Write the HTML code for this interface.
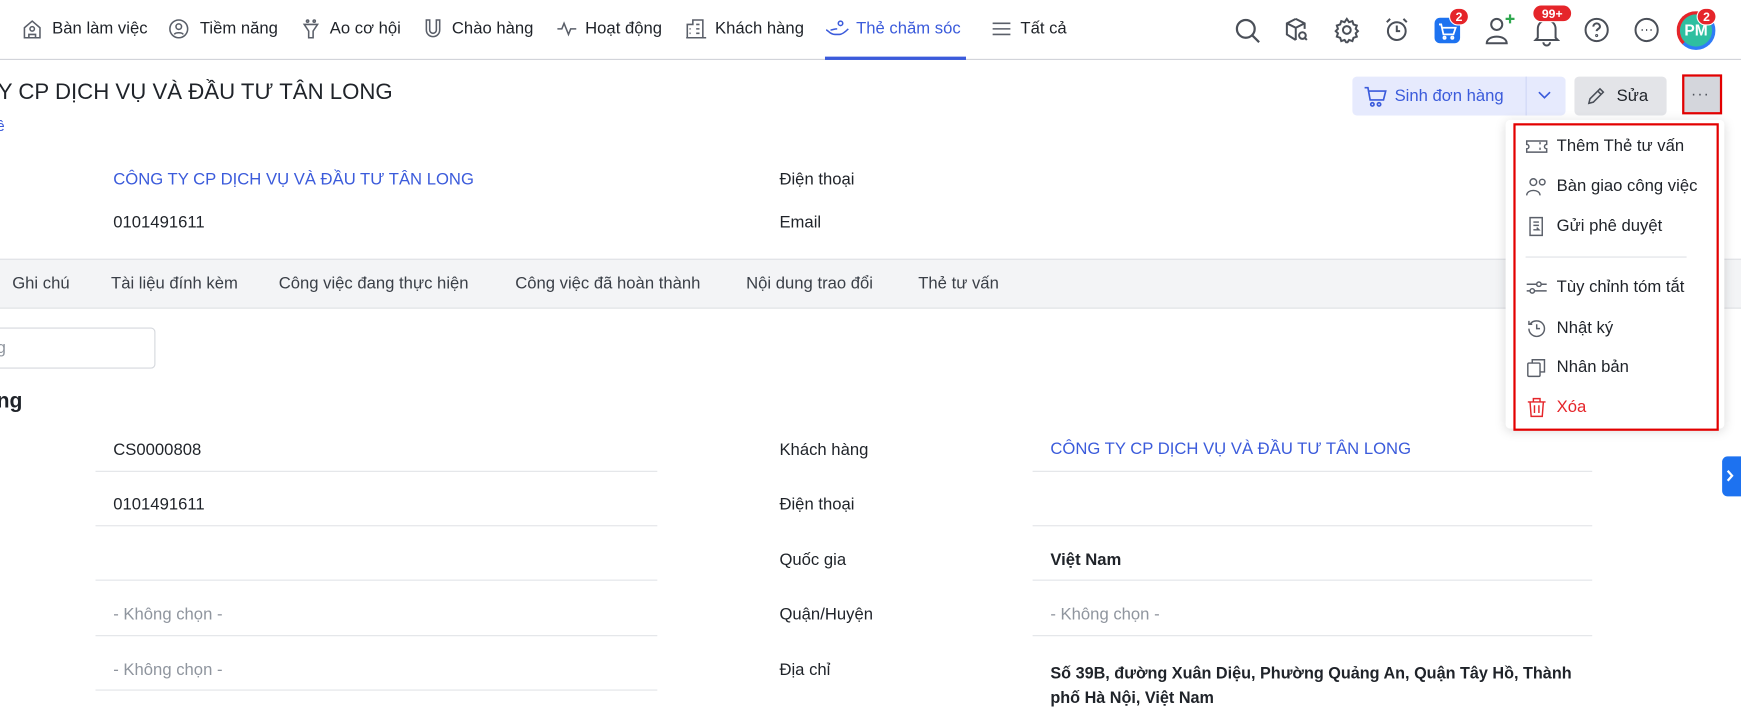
<!DOCTYPE html>
<html><head><meta charset="utf-8"><style>
*{margin:0;padding:0;box-sizing:border-box}
html,body{width:1741px;height:705px;overflow:hidden;background:#fff}
#w{position:absolute;left:0;top:0;width:1568px;height:635px;transform:scale(1.11033);transform-origin:0 0;font-family:"Liberation Sans",sans-serif;color:#1f2329;font-size:15px}
.a{position:absolute;white-space:nowrap}
.nav{position:absolute;left:0;top:0;width:1568px;height:54px;border-bottom:1px solid #d0d3d9}
.ni{position:absolute;top:17px;font-size:15px;color:#1f2329}
.ic{position:absolute}
.blue{color:#3b5bdb}
.ul{position:absolute;height:1px;background:#e2e4e8}
.grey{color:#8f959e}
.mi{position:absolute;left:1374px;font-size:15px;color:#1f2329}
.mi svg{position:absolute;left:0;top:0}
.mi span{position:absolute;left:28px;top:0;white-space:nowrap}
.badge{position:absolute;background:#e5252a;color:#fff;font-size:11px;font-weight:bold;border-radius:9px;text-align:center;line-height:16px;height:16px;border:1px solid #fff}
</style></head><body><div id="w">
<div class="nav">
<svg class="ic" style="left:19px;top:16px" width="20" height="20" viewBox="0 0 20 20" fill="none" stroke="#5a5f69" stroke-width="1.4"><path d="M3 9l7-6 7 6v9H3z"/><circle cx="10" cy="10" r="2"/><path d="M7 18v-3h6v3"/></svg>
<div class="ni" style="left:47px">Bàn làm việc</div>
<svg class="ic" style="left:151px;top:16px" width="20" height="20" viewBox="0 0 20 20" fill="none" stroke="#5a5f69" stroke-width="1.4"><circle cx="10" cy="10" r="8"/><circle cx="10" cy="8" r="2.5"/><path d="M6 15c1-2 7-2 8 0"/></svg>
<div class="ni" style="left:180px">Tiềm năng</div>
<svg class="ic" style="left:271px;top:16px" width="18" height="20" viewBox="0 0 18 20" fill="none" stroke="#5a5f69" stroke-width="1.4"><path d="M3 6h12l-4 6v6H7v-6z"/><circle cx="6" cy="3" r="1"/><circle cx="12" cy="3" r="1"/></svg>
<div class="ni" style="left:297px">Ao cơ hội</div>
<svg class="ic" style="left:381px;top:16px" width="18" height="20" viewBox="0 0 18 20" fill="none" stroke="#5a5f69" stroke-width="1.4"><path d="M3 2v9a6 6 0 0012 0V2h-3v9a3 3 0 01-6 0V2z"/></svg>
<div class="ni" style="left:407px">Chào hàng</div>
<svg class="ic" style="left:501px;top:16px" width="20" height="20" viewBox="0 0 20 20" fill="none" stroke="#5a5f69" stroke-width="1.4"><path d="M1 10h4l2-5 4 10 2-5h5"/></svg>
<div class="ni" style="left:527px">Hoạt động</div>
<svg class="ic" style="left:617px;top:16px" width="20" height="20" viewBox="0 0 20 20" fill="none" stroke="#5a5f69" stroke-width="1.4"><path d="M2 18V6h5V2h9v16zM1 18h18M10 6h3M10 10h3M10 14h3M4 10h1M4 14h1"/></svg>
<div class="ni" style="left:644px">Khách hàng</div>
<svg class="ic" style="left:743px;top:16px" width="22" height="20" viewBox="0 0 22 20" fill="none" stroke="#3b5bdb" stroke-width="1.4"><path d="M1 11c2 0 3 4 8 4h4c3 0 6-3 8-5M5 11c2 0 3-1 6-1M14 3a2 2 0 110 4 2 2 0 010-4z"/></svg>
<div class="ni blue" style="left:771px">Thẻ chăm sóc</div>
<div class="a" style="left:743px;top:51px;width:127px;height:3px;background:#3b5bdb"></div>
<svg class="ic" style="left:893px;top:17px" width="18" height="18" viewBox="0 0 18 18" stroke="#5a5f69" stroke-width="1.4"><path d="M1 4h16M1 9h16M1 14h16"/></svg>
<div class="ni" style="left:919px">Tất cả</div>

<svg class="ic" style="left:1111px;top:15px" width="26" height="26" viewBox="0 0 26 26" fill="none" stroke="#4a4f58" stroke-width="2"><circle cx="11" cy="11" r="8"/><path d="M17 17l6 6"/></svg>
<svg class="ic" style="left:1156px;top:15px" width="24" height="24" viewBox="0 0 24 24" fill="none" stroke="#4a4f58" stroke-width="1.8"><path d="M11 2l8 4v5M11 2L3 6v10l8 5M3 6l8 4 8-4M11 10v11"/><circle cx="17" cy="17" r="3"/><path d="M19 19l2 2"/></svg>
<svg class="ic" style="left:1201px;top:15px" width="24" height="24" viewBox="0 0 24 24" fill="none" stroke="#4a4f58" stroke-width="1.8"><circle cx="12" cy="12" r="3.5"/><path d="M12 2l2 3 3-1 1 3 3 1-1 3 2 2-2 2 1 3-3 1-1 3-3-1-2 3-2-3-3 1-1-3-3-1 1-3-2-2 2-2-1-3 3-1 1-3 3 1z"/></svg>
<svg class="ic" style="left:1246px;top:15px" width="24" height="24" viewBox="0 0 24 24" fill="none" stroke="#4a4f58" stroke-width="1.8"><circle cx="12" cy="13" r="8"/><path d="M12 8v5h3M3 5l3-3M21 5l-3-3"/></svg>
<div class="a" style="left:1292px;top:16px;width:23px;height:23px;border-radius:5px;background:#1d72f0"></div>
<svg class="ic" style="left:1294px;top:19px" width="19" height="18" viewBox="0 0 19 18" fill="none" stroke="#fff" stroke-width="1.6"><path d="M2 3h2l2 9h9l2-6H5"/><circle cx="7" cy="15" r="1"/><circle cx="14" cy="15" r="1"/></svg>
<div class="badge" style="left:1305px;top:7px;width:18px">2</div>
<svg class="ic" style="left:1336px;top:13px" width="28" height="28" viewBox="0 0 28 28" fill="none" stroke="#4a4f58" stroke-width="1.8"><circle cx="12" cy="9" r="5"/><path d="M3 26c0-8 18-8 18 0z"/></svg>
<svg class="ic" style="left:1355px;top:12px" width="10" height="10" viewBox="0 0 10 10" stroke="#2fa84f" stroke-width="2"><path d="M5 1v8M1 5h8"/></svg>
<svg class="ic" style="left:1381px;top:14px" width="24" height="28" viewBox="0 0 24 28" fill="none" stroke="#4a4f58" stroke-width="1.8"><path d="M4 20V12a8 8 0 0116 0v8l2 2H2zM9 24a3 3 0 006 0"/></svg>
<div class="badge" style="left:1380px;top:4px;width:36px">99+</div>
<svg class="ic" style="left:1426px;top:15px" width="24" height="24" viewBox="0 0 24 24" fill="none" stroke="#4a4f58" stroke-width="1.8"><circle cx="12" cy="12" r="10"/><path d="M9 9a3 3 0 116 0c0 2-3 2-3 4"/><circle cx="12" cy="17" r=".5"/></svg>
<svg class="ic" style="left:1471px;top:15px" width="24" height="24" viewBox="0 0 24 24" fill="none" stroke="#4a4f58" stroke-width="1.8"><circle cx="12" cy="12" r="10"/><path d="M7.5 12h1M11.5 12h1M15.5 12h1"/></svg>
<div class="a" style="left:1510px;top:10px;width:35px;height:35px;border-radius:50%;border:3px solid #e5252a;border-bottom-color:#2f7cf6;border-right-color:#2f7cf6;background:#2ebfa0;color:#fff;font-weight:bold;font-size:14px;text-align:center;line-height:29px">PM</div>
<div class="badge" style="left:1528px;top:7px;width:18px">2</div>
</div>

<div class="a" style="left:-2px;top:72px;font-size:20px;color:#1f2329">Y CP DỊCH VỤ VÀ ĐẦU TƯ TÂN LONG</div>
<div class="a blue" style="left:-3px;top:106px;font-size:13px">ề</div>

<div class="a" style="left:1218px;top:69px;width:192px;height:35px;background:#e6eafd;border-radius:4px"></div>
<div class="a" style="left:1374px;top:69px;width:1px;height:35px;background:#cfd6f5"></div>
<svg class="ic" style="left:1228px;top:77px" width="22" height="20" viewBox="0 0 22 20" fill="none" stroke="#3b5bdb" stroke-width="1.5"><path d="M1 2h3l2 11h12l2-8H5"/><circle cx="8" cy="17" r="1.5"/><circle cx="14" cy="17" r="1.5"/></svg>
<div class="a blue" style="left:1256px;top:78px;font-size:15px">Sinh đơn hàng</div>
<svg class="ic" style="left:1385px;top:82px" width="12" height="8" viewBox="0 0 12 8" fill="none" stroke="#3b5bdb" stroke-width="1.5"><path d="M1 1l5 5 5-5"/></svg>
<div class="a" style="left:1418px;top:69px;width:83px;height:35px;background:#e3e4e8;border-radius:4px"></div>
<svg class="ic" style="left:1428px;top:77px" width="19" height="19" viewBox="0 0 19 19" fill="none" stroke="#4a4f58" stroke-width="1.4"><path d="M3 16l1-4L13 3l3 3-9 9zM11 5l3 3"/></svg>
<div class="a" style="left:1456px;top:78px;font-size:15px">Sửa</div>
<div class="a" style="left:1515px;top:67px;width:36px;height:36px;background:#d4d6dc;border:2px solid #e30000"></div>
<div class="a" style="left:1523px;top:76px;font-size:14px;color:#4a4f58;letter-spacing:1px">···</div>

<div class="a blue" style="left:102px;top:153px">CÔNG TY CP DỊCH VỤ VÀ ĐẦU TƯ TÂN LONG</div>
<div class="a" style="left:102px;top:192px">0101491611</div>
<div class="a" style="left:702px;top:153px">Điện thoại</div>
<div class="a" style="left:702px;top:192px">Email</div>

<div class="a" style="left:0;top:233px;width:1568px;height:45px;background:#f3f4f6;border-top:1px solid #dfe1e5;border-bottom:1px solid #dfe1e5"></div>
<div class="a" style="left:11px;top:247px;color:#3a3f47">Ghi chú</div>
<div class="a" style="left:100px;top:247px;color:#3a3f47">Tài liệu đính kèm</div>
<div class="a" style="left:251px;top:247px;color:#3a3f47">Công việc đang thực hiện</div>
<div class="a" style="left:464px;top:247px;color:#3a3f47">Công việc đã hoàn thành</div>
<div class="a" style="left:672px;top:247px;color:#3a3f47">Nội dung trao đổi</div>
<div class="a" style="left:827px;top:247px;color:#3a3f47">Thẻ tư vấn</div>

<div class="a" style="left:-10px;top:295px;width:150px;height:37px;border:1px solid #d5d8dd;border-radius:4px"></div>
<div class="a grey" style="left:-3px;top:305px">g</div>
<div class="a" style="left:-3px;top:351px;font-size:19px;font-weight:bold">ng</div>

<div class="a" style="left:102px;top:397px">CS0000808</div>
<div class="a" style="left:102px;top:446px">0101491611</div>
<div class="a grey" style="left:102px;top:545px">- Không chọn -</div>
<div class="a grey" style="left:102px;top:595px">- Không chọn -</div>
<div class="ul" style="left:86px;top:424px;width:506px"></div>
<div class="ul" style="left:86px;top:473px;width:506px"></div>
<div class="ul" style="left:86px;top:522px;width:506px"></div>
<div class="ul" style="left:86px;top:572px;width:506px"></div>
<div class="ul" style="left:86px;top:621px;width:506px"></div>

<div class="a" style="left:702px;top:397px">Khách hàng</div>
<div class="a" style="left:702px;top:446px">Điện thoại</div>
<div class="a" style="left:702px;top:496px">Quốc gia</div>
<div class="a" style="left:702px;top:545px">Quận/Huyện</div>
<div class="a" style="left:702px;top:595px">Địa chỉ</div>
<div class="a blue" style="left:946px;top:396px">CÔNG TY CP DỊCH VỤ VÀ ĐẦU TƯ TÂN LONG</div>
<div class="a" style="left:946px;top:496px;font-weight:bold">Việt Nam</div>
<div class="a grey" style="left:946px;top:545px">- Không chọn -</div>
<div class="a" style="left:946px;top:596px;font-weight:bold;width:480px;line-height:22px;font-size:14.6px">Số 39B, đường Xuân Diệu, Phường Quảng An, Quận Tây Hồ, Thành<br>phố Hà Nội, Việt Nam</div>
<div class="ul" style="left:930px;top:424px;width:504px"></div>
<div class="ul" style="left:930px;top:473px;width:504px"></div>
<div class="ul" style="left:930px;top:522px;width:504px"></div>
<div class="ul" style="left:930px;top:572px;width:504px"></div>

<div class="a" style="left:1551px;top:411px;width:17px;height:36px;background:#1d72f0;border-radius:5px 0 0 5px"></div>
<svg class="ic" style="left:1554px;top:422px" width="8" height="13" viewBox="0 0 8 13" fill="none" stroke="#fff" stroke-width="2"><path d="M2 2l4 4.5L2 11"/></svg>

<div class="a" style="left:1356px;top:108px;width:197px;height:278px;background:#fff;border-radius:4px;box-shadow:0 2px 10px rgba(0,0,0,.15)"></div>
<div class="a" style="left:1363px;top:111px;width:185px;height:277px;border:2px solid #e30000"></div>
<div class="mi" style="top:123px"><svg width="20" height="18" viewBox="0 0 20 18" fill="none" stroke="#5a5f69" stroke-width="1.3"><path d="M1 4h18v3a2 2 0 000 4v3H1v-3a2 2 0 000-4zM13 5v2M13 10v2"/></svg><span>Thêm Thẻ tư vấn</span></div>
<div class="mi" style="top:159px"><svg width="20" height="18" viewBox="0 0 20 18" fill="none" stroke="#5a5f69" stroke-width="1.3"><circle cx="7" cy="5" r="3"/><path d="M1 17c0-6 12-6 12 0"/><circle cx="15" cy="5" r="2.5"/></svg><span>Bàn giao công việc</span></div>
<div class="mi" style="top:195px"><svg width="20" height="18" viewBox="0 0 20 18" fill="none" stroke="#5a5f69" stroke-width="1.3"><path d="M4 1h11v16H4zM7 5h5M7 8h5M7 12h5l-2-2"/></svg><span>Gửi phê duyệt</span></div>
<div class="a" style="left:1374px;top:231px;width:145px;height:1px;background:#dfe1e5"></div>
<div class="mi" style="top:250px"><svg width="20" height="18" viewBox="0 0 20 18" fill="none" stroke="#5a5f69" stroke-width="1.3"><path d="M1 6h18M1 12h18"/><circle cx="12" cy="6" r="2" fill="#fff"/><circle cx="6" cy="12" r="2" fill="#fff"/></svg><span>Tùy chỉnh tóm tắt</span></div>
<div class="mi" style="top:287px"><svg width="20" height="18" viewBox="0 0 20 18" fill="none" stroke="#5a5f69" stroke-width="1.3"><path d="M3 9a7 7 0 107-7 7 7 0 00-6 3M3 2v3h3M10 5v4h3"/></svg><span>Nhật ký</span></div>
<div class="mi" style="top:322px"><svg width="20" height="18" viewBox="0 0 20 18" fill="none" stroke="#5a5f69" stroke-width="1.3"><rect x="2" y="5" width="11" height="12" rx="1"/><path d="M6 5V2h11v11h-4"/></svg><span>Nhân bản</span></div>
<div class="mi" style="top:358px;color:#e5252a"><svg width="20" height="18" viewBox="0 0 20 18" fill="none" stroke="#e5252a" stroke-width="1.3"><path d="M2 4h16M7 4V1h6v3M4 4l1 13h10l1-13M8 7v7M12 7v7"/></svg><span>Xóa</span></div>
</div></body></html>
